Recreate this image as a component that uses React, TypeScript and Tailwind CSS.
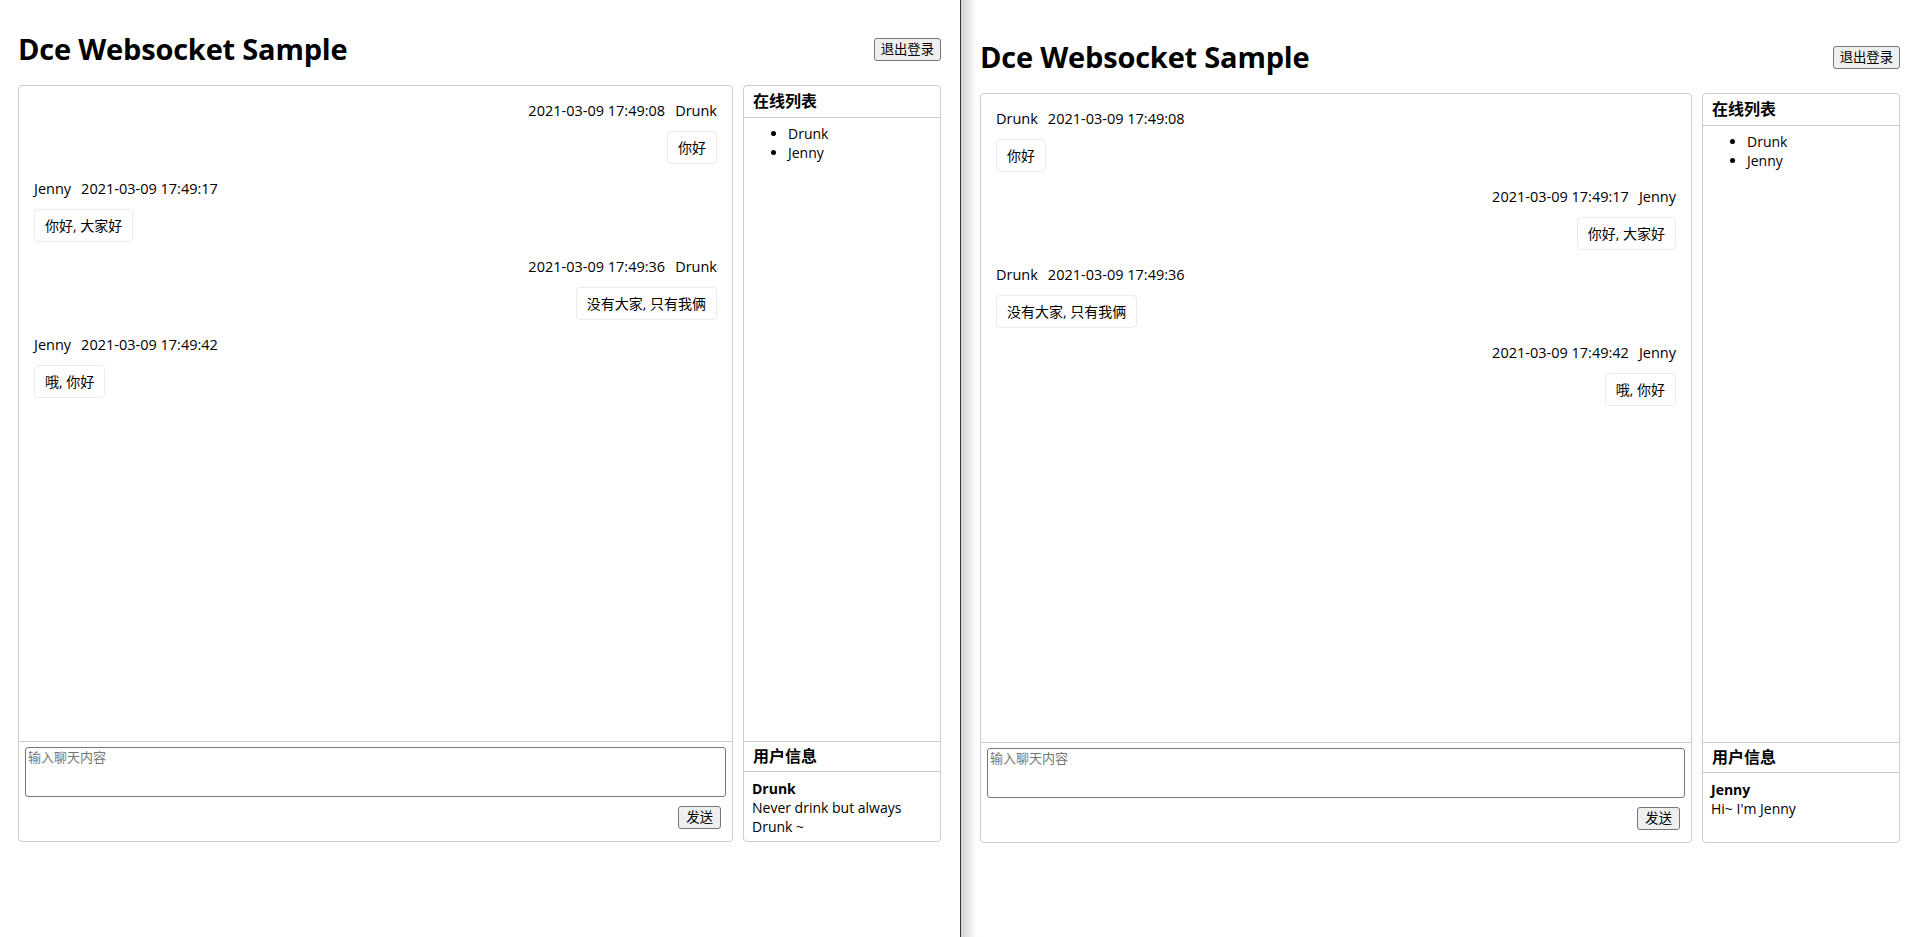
import React from 'react';

interface Message {
  user: string;
  time: string;
  text: string;
}

const messages: Message[] = [
  { user: 'Drunk', time: '2021-03-09 17:49:08', text: '你好' },
  { user: 'Jenny', time: '2021-03-09 17:49:17', text: '你好, 大家好' },
  { user: 'Drunk', time: '2021-03-09 17:49:36', text: '没有大家, 只有我俩' },
  { user: 'Jenny', time: '2021-03-09 17:49:42', text: '哦, 你好' },
];

const profiles: Record<string, string> = {
  Drunk: 'Never drink but always Drunk ~',
  Jenny: "Hi~ I'm Jenny",
};

const online = ['Drunk', 'Jenny'];

const font = "font-['Open_Sans','Noto_Sans_CJK_SC',sans-serif]";

function ChatWindow({ me, wrapClass, panelClass }: { me: string; wrapClass: string; panelClass: string }) {
  return (
    <div className={wrapClass}>
      <div className="flex h-[44px] items-center justify-between">
        <h1 className="text-[29px] font-bold leading-[44px] tracking-[-0.2px] text-black">Dce Websocket Sample</h1>
        <button className="h-[23px] rounded-[3px] border border-[#767676] bg-[#efefef] px-[6px] text-[13.33px] leading-[19px] text-black">
          退出登录
        </button>
      </div>

      <div className={`mt-[14px] flex gap-[10px] ${panelClass}`}>
        {/* chat */}
        <div className="flex flex-1 flex-col rounded-[4px] border border-[#cccccc]">
          <div className="flex-1 px-[15px] pt-[15px]">
            {messages.map((m, i) => {
              const mine = m.user === me;
              return (
                <div key={i} className={`mb-[15px] flex flex-col ${mine ? 'items-end' : 'items-start'}`}>
                  <div className="flex gap-[10px] text-[14.5px] leading-[20px] text-black">
                    {mine ? (
                      <>
                        <span>{m.time}</span>
                        <span>{m.user}</span>
                      </>
                    ) : (
                      <>
                        <span>{m.user}</span>
                        <span>{m.time}</span>
                      </>
                    )}
                  </div>
                  <div className="mt-[10px] rounded-[4px] border border-[#ebebeb] px-[10px] py-[6px] text-[14px] leading-[19px] text-black">
                    {m.text}
                  </div>
                </div>
              );
            })}
          </div>
          <div className="flex h-[100px] flex-col border-t border-[#cccccc] px-[6px] pt-[5px]">
            <textarea
              placeholder="输入聊天内容"
              className="h-[50px] w-full resize-none rounded-[3px] border border-[#767676] px-[2px] py-[1px] text-[13px] leading-[16px] placeholder:text-[#757575]"
            />
            <div className="mt-[9px] flex justify-end pr-[5px]">
              <button className="h-[23px] rounded-[3px] border border-[#767676] bg-[#efefef] px-[7px] text-[13.33px] leading-[19px] text-black">
                发送
              </button>
            </div>
          </div>
        </div>

        {/* side */}
        <div className="flex w-[198px] flex-col rounded-[4px] border border-[#cccccc]">
          <div className="flex-1">
            <div className="border-b border-[#cccccc] px-[9px] py-[5px] text-[16px] font-bold leading-[21px] text-black">在线列表</div>
            <ul className="list-disc pl-[44px] pt-[6px] text-[14px] leading-[19px] text-black">
              {online.map((u) => (
                <li key={u}>{u}</li>
              ))}
            </ul>
          </div>
          <div className="h-[100px] border-t border-[#cccccc]">
            <div className="border-b border-[#cccccc] px-[9px] py-[4px] text-[16px] font-bold leading-[21px] text-black">用户信息</div>
            <div className="px-[8px] pt-[7px] text-[14px] leading-[19px] text-black">
              <div className="font-bold">{me}</div>
              <div>{profiles[me]}</div>
            </div>
          </div>
        </div>
      </div>
    </div>
  );
}

export default function App() {
  return (
    <div className={`flex h-[937px] w-full bg-white ${font}`}>
      <div className="w-[960px] shrink-0">
        <ChatWindow me="Drunk" wrapClass="pl-[18px] pr-[19px] pt-[27px]" panelClass="h-[757px]" />
      </div>
      <div className="w-px shrink-0 bg-[#3a3a3a]" />
      <div className="flex-1 bg-[linear-gradient(to_right,#d2d2d2,#ffffff_16px)]">
        <ChatWindow me="Jenny" wrapClass="pl-[19px] pr-[19px] pt-[35px]" panelClass="h-[750px]" />
      </div>
    </div>
  );
}
